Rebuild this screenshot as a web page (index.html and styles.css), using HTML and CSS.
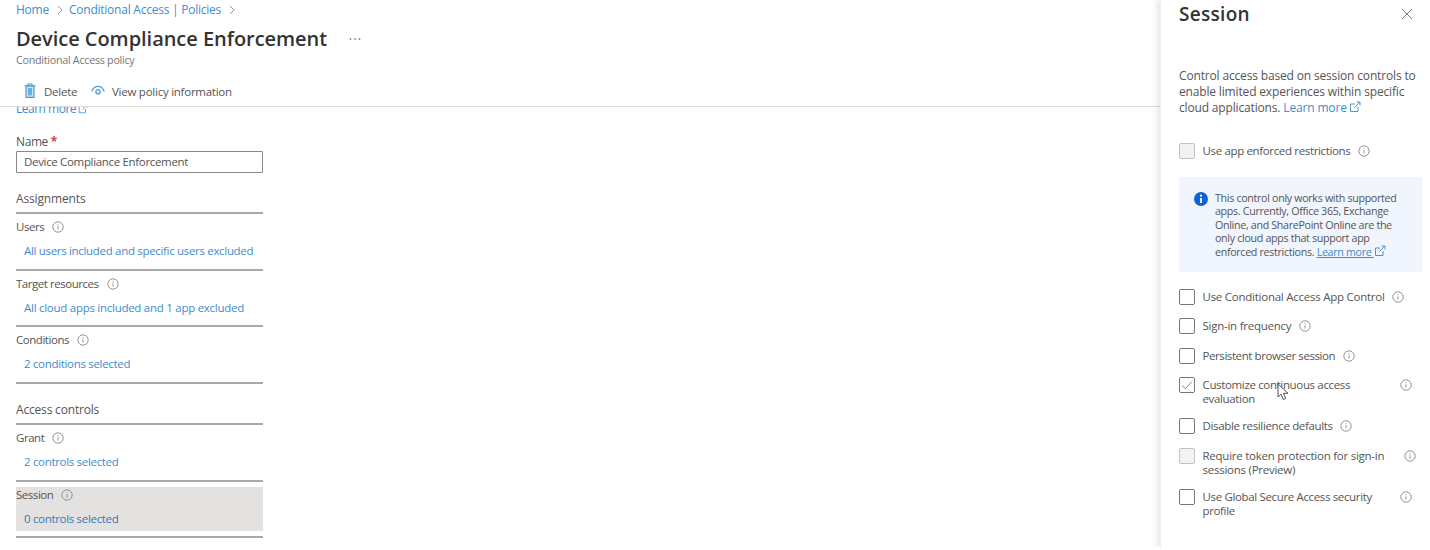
FILE: index.html
```html
<!DOCTYPE html>
<html lang="en">
<head>
<meta charset="utf-8">
<title>Device Compliance Enforcement</title>
<link rel="stylesheet" href="styles.css">
</head>
<body>
<svg class="defs" width="0" height="0">
  <symbol id="info" viewBox="0 0 12 12"><circle cx="6" cy="6" r="5.2" fill="none" stroke="currentColor" stroke-width=".9"/><path d="M6 5.2v3.3M6 3.2v1" stroke="currentColor" stroke-width=".9"/></symbol>
  <symbol id="external" viewBox="0 0 12 12"><path d="M6 3H1.5v7.5H9V6M5.5 6.5L10.8 1.2M7.5 1H11v3.5" fill="none" stroke="currentColor" stroke-width="1"/></symbol>
  <symbol id="chevron" viewBox="0 0 6 10"><path d="M1 1l4 4-4 4" fill="none" stroke="currentColor"/></symbol>
</svg>
<div class="app">
  <main class="main">
    <header class="header">
      <nav class="crumbs"><a>Home</a><svg class="chev"><use href="#chevron"/></svg><a>Conditional Access | Policies</a><svg class="chev"><use href="#chevron"/></svg></nav>
      <div class="title-row"><h1>Device Compliance Enforcement</h1><svg class="dots" viewBox="0 0 12 4"><circle cx="1.5" cy="2" r=".9"/><circle cx="6" cy="2" r=".9"/><circle cx="10.5" cy="2" r=".9"/></svg></div>
      <p class="subtitle">Conditional Access policy</p>
      <div class="toolbar">
        <svg class="trash" viewBox="0 0 12 16"><path d="M2 3h8v11.3H2z" fill="#c9e5f8" stroke="#4b9bd5" stroke-width="1.2"/><path d="M.5 2.8h11M4 2.5V1h4v1.5" fill="none" stroke="#4b9bd5" stroke-width="1.1"/><path d="M4 5h4v7.500H4z" fill="#6db0e0"/></svg>
        <span class="delete">Delete</span>
        <svg class="eye" viewBox="0 0 14 12"><path d="M.8 6.500C1.800 3 4 1.300 7 1.300S12.200 3 13.200 6.500" fill="none" stroke="#4b9bd5" stroke-width="1.2"/><circle cx="7" cy="6.700" r="2.200" fill="#d9eefb" stroke="#4b9bd5" stroke-width="1.200"/></svg>
        <span class="view">View policy information</span>
      </div>
    </header>
    <div class="scroll">
      <div class="more-cut"><a>Learn more</a><svg class="ext"><use href="#external"/></svg></div>
      <label class="name-label">Name <b>*</b></label>
      <div class="field">Device Compliance Enforcement</div>
      <h2 class="group assign">Assignments</h2>
      <section class="item"><div class="item-title"><span>Users</span><svg class="info"><use href="#info"/></svg></div><a class="value">All users included and specific users excluded</a></section>
      <section class="item"><div class="item-title"><span>Target resources</span><svg class="info"><use href="#info"/></svg></div><a class="value apps">All cloud apps included and 1 app excluded</a></section>
      <section class="item"><div class="item-title"><span>Conditions</span><svg class="info"><use href="#info"/></svg></div><a class="value">2 conditions selected</a></section>
      <h2 class="group controls">Access controls</h2>
      <section class="item"><div class="item-title"><span>Grant</span><svg class="info"><use href="#info"/></svg></div><a class="value">2 controls selected</a></section>
      <section class="item"><div class="item-fill"><div class="item-title"><span>Session</span><svg class="info"><use href="#info"/></svg></div><a class="value">0 controls selected</a></div></section>
    </div>
  </main>
  <aside class="panel">
    <div class="panel-head"><h2>Session</h2><svg class="close" viewBox="0 0 12 12"><path d="M1 1l10 10M11 1L1 11" stroke="#777" stroke-width="1"/></svg></div>
    <p class="intro">Control access based on session controls to<br>enable limited experiences within specific<br>cloud applications. <a>Learn more</a><svg class="ext"><use href="#external"/></svg></p>
    <div class="check first"><i class="box disabled"></i><span>Use app enforced restrictions</span><svg class="info"><use href="#info"/></svg></div>
    <div class="notice">
      <svg class="badge" viewBox="0 0 14 14"><circle cx="7" cy="7" r="7" fill="#0f62d6"/><circle cx="7" cy="3.700" r="1.100" fill="#fff"/><path d="M7 6v5" stroke="#fff" stroke-width="1.800"/></svg>
      <p>This control only works with supported<br>apps. Currently, Office 365, Exchange<br>Online, and SharePoint Online are the<br>only cloud apps that support app<br>enforced restrictions. <a>Learn more </a><svg class="ext"><use href="#external"/></svg></p>
    </div>
    <div class="checks">
      <div class="check"><i class="box"></i><span class="loose">Use Conditional Access App Control</span><svg class="info"><use href="#info"/></svg></div>
      <div class="check"><i class="box"></i><span class="loose">Sign-in frequency</span><svg class="info"><use href="#info"/></svg></div>
      <div class="check"><i class="box"></i><span class="tight">Persistent browser session</span><svg class="info"><use href="#info"/></svg></div>
      <div class="check two"><i class="box"><svg viewBox="0 0 14 14"><path d="M2 7.500l3.300 3.200L12 3.500" fill="none" stroke="#888" stroke-width="1"/></svg></i><span>Customize continuous access<br>evaluation</span><svg class="info far"><use href="#info"/></svg>
        <svg class="cursor" viewBox="0 0 12 18"><path d="M1 1v13l3-2.800 2.200 5.300 2.500-1-2.200-5.200H11z" fill="#fff" stroke="#555" stroke-width="1"/></svg></div>
      <div class="check"><i class="box"></i><span>Disable resilience defaults</span><svg class="info"><use href="#info"/></svg></div>
      <div class="check two"><i class="box disabled"></i><span class="loose">Require token protection for sign-in<br>sessions (Preview)</span><svg class="info farther"><use href="#info"/></svg></div>
      <div class="check two"><i class="box"></i><span>Use Global Secure Access security<br>profile</span><svg class="info far"><use href="#info"/></svg></div>
    </div>
  </aside>
</div>
</body>
</html>
```
FILE: styles.css
```css
* { box-sizing: border-box; }
body { margin: 0; background: #fff; color: #555; font: 12px/16px "Open Sans", "Noto Sans", sans-serif; letter-spacing: -.15px; overflow: hidden; }
h1, h2, p { margin: 0; }
a { color: #3f8ccc; }
svg { display: block; flex: none; }
.defs { position: absolute; }
.app { display: flex; width: 1430px; height: 547px; overflow: hidden; }
.main { flex: 1; overflow: hidden; }
.header { height: 107px; border-bottom: 1px solid #dcdcdc; padding-left: 16px; }
.crumbs { display: flex; align-items: center; height: 18px; padding-top: 1px; letter-spacing: -.24px; }
.chev { width: 6px; height: 10px; margin: 0 6px 0 8px; color: #999; }
.title-row { display: flex; align-items: center; height: 36px; padding-top: 6px; }
h1 { font-size: 20px; line-height: 30px; font-weight: 600; color: #333; letter-spacing: -.04px; }
.dots { width: 12px; height: 4px; margin-left: 22px; fill: #888; }
.subtitle { font-size: 10.800px; line-height: 14px; margin-top: -1px; color: #777; letter-spacing: -.3px; }
.toolbar { display: flex; align-items: center; height: 32px; margin-top: 9px; padding-left: 8px; font-size: 11.500px; letter-spacing: -.25px; }
.trash { width: 12px; height: 16px; margin-top: -2px; }
.delete { margin-left: 8px; width: 47px; }
.eye { width: 14px; height: 12px; margin: -2px 7px 0 0; }
.scroll { height: 440px; overflow: hidden; padding-left: 16px; }
.scroll > * { width: 247px; }
.more-cut { display: flex; align-items: center; height: 16px; margin-top: -6px; letter-spacing: -.5px; }
.ext { width: 12px; height: 12px; color: #4b96d3; }
.more-cut .ext { width: 10px; height: 10px; margin-left: 2px; }
.name-label { display: block; height: 16px; margin-top: 17px; letter-spacing: -.4px; }
.name-label b { color: #c4454c; }
.field { height: 22px; margin-top: 1px; padding: 2px 7px 0; border: 1px solid #888; border-radius: 1px; font-size: 11.500px; letter-spacing: -.33px; }
.group { font-size: 12px; line-height: 16px; font-weight: 400; height: 23px; border-bottom: 2px solid #a8a8a8; }
.assign { margin-top: 18px; }
.controls { margin-top: 18px; letter-spacing: -.18px; }
.item { height: 56.700px; padding-top: 5px; border-bottom: 2px solid #a8a8a8; font-size: 11.500px; letter-spacing: -.32px; }
.item-title { display: flex; align-items: center; height: 16px; letter-spacing: -.46px; }
.info { width: 12px; height: 12px; margin-left: 8px; color: #888; }
.value { display: block; margin: 8px 0 0 8px; white-space: nowrap; }
.apps { letter-spacing: -.27px; }
.item-fill { height: 44px; background: #e3e2e1; }
.item-fill .value { color: #3a76b4; }
.panel { width: 270px; border-left: 1px solid #ededed; box-shadow: -2px 0 7px rgba(0,0,0,.12); background: #fff; padding-left: 18px; z-index: 1; }
.panel-head { display: flex; justify-content: space-between; align-items: center; height: 28px; padding-right: 17px; }
.panel-head h2 { font-size: 19px; line-height: 26px; font-weight: 600; color: #333; letter-spacing: .3px; }
.close { width: 12px; height: 12px; }
.intro { margin-top: 40px; height: 48px; white-space: nowrap; letter-spacing: -.16px; }
.intro .ext, .notice .ext { display: inline-block; margin-left: 2px; vertical-align: -1px; }
.check { position: relative; display: flex; align-items: flex-start; height: 29.300px; line-height: 14px; white-space: nowrap; font-size: 11.500px; letter-spacing: -.35px; }
.loose { letter-spacing: -.25px; }
.tight { letter-spacing: -.42px; }
.box { width: 16px; height: 16px; border: 1px solid #777; border-radius: 2px; margin-right: 7.500px; }
.box svg { width: 14px; height: 14px; }
.disabled { background: #f2f2f2; border-color: #c2c2c2; }
.check > span { padding-top: 1px; }
.check > .info { margin-top: 2px; margin-left: 7.500px; }
.first { margin-top: 27px; height: 34px; }
.notice { display: flex; width: 243px; height: 95px; background: #f0f5fe; padding: 15px 0 0 15px; }
.badge { width: 14px; height: 14px; margin: 0 7px 0 0; }
.notice p { font-size: 10.700px; line-height: 13.300px; letter-spacing: -.32px; white-space: nowrap; }
.notice a { text-decoration: underline; }
.notice .ext { margin-left: 0; }
.checks { margin-top: 17px; }
.two { height: 41.500px; }
.check > .far, .check > .farther { margin-left: auto; margin-right: 18px; }
.check > .farther { margin-right: 14px; }
.cursor { position: absolute; left: 98px; top: 6px; width: 12px; height: 18px; }
```
